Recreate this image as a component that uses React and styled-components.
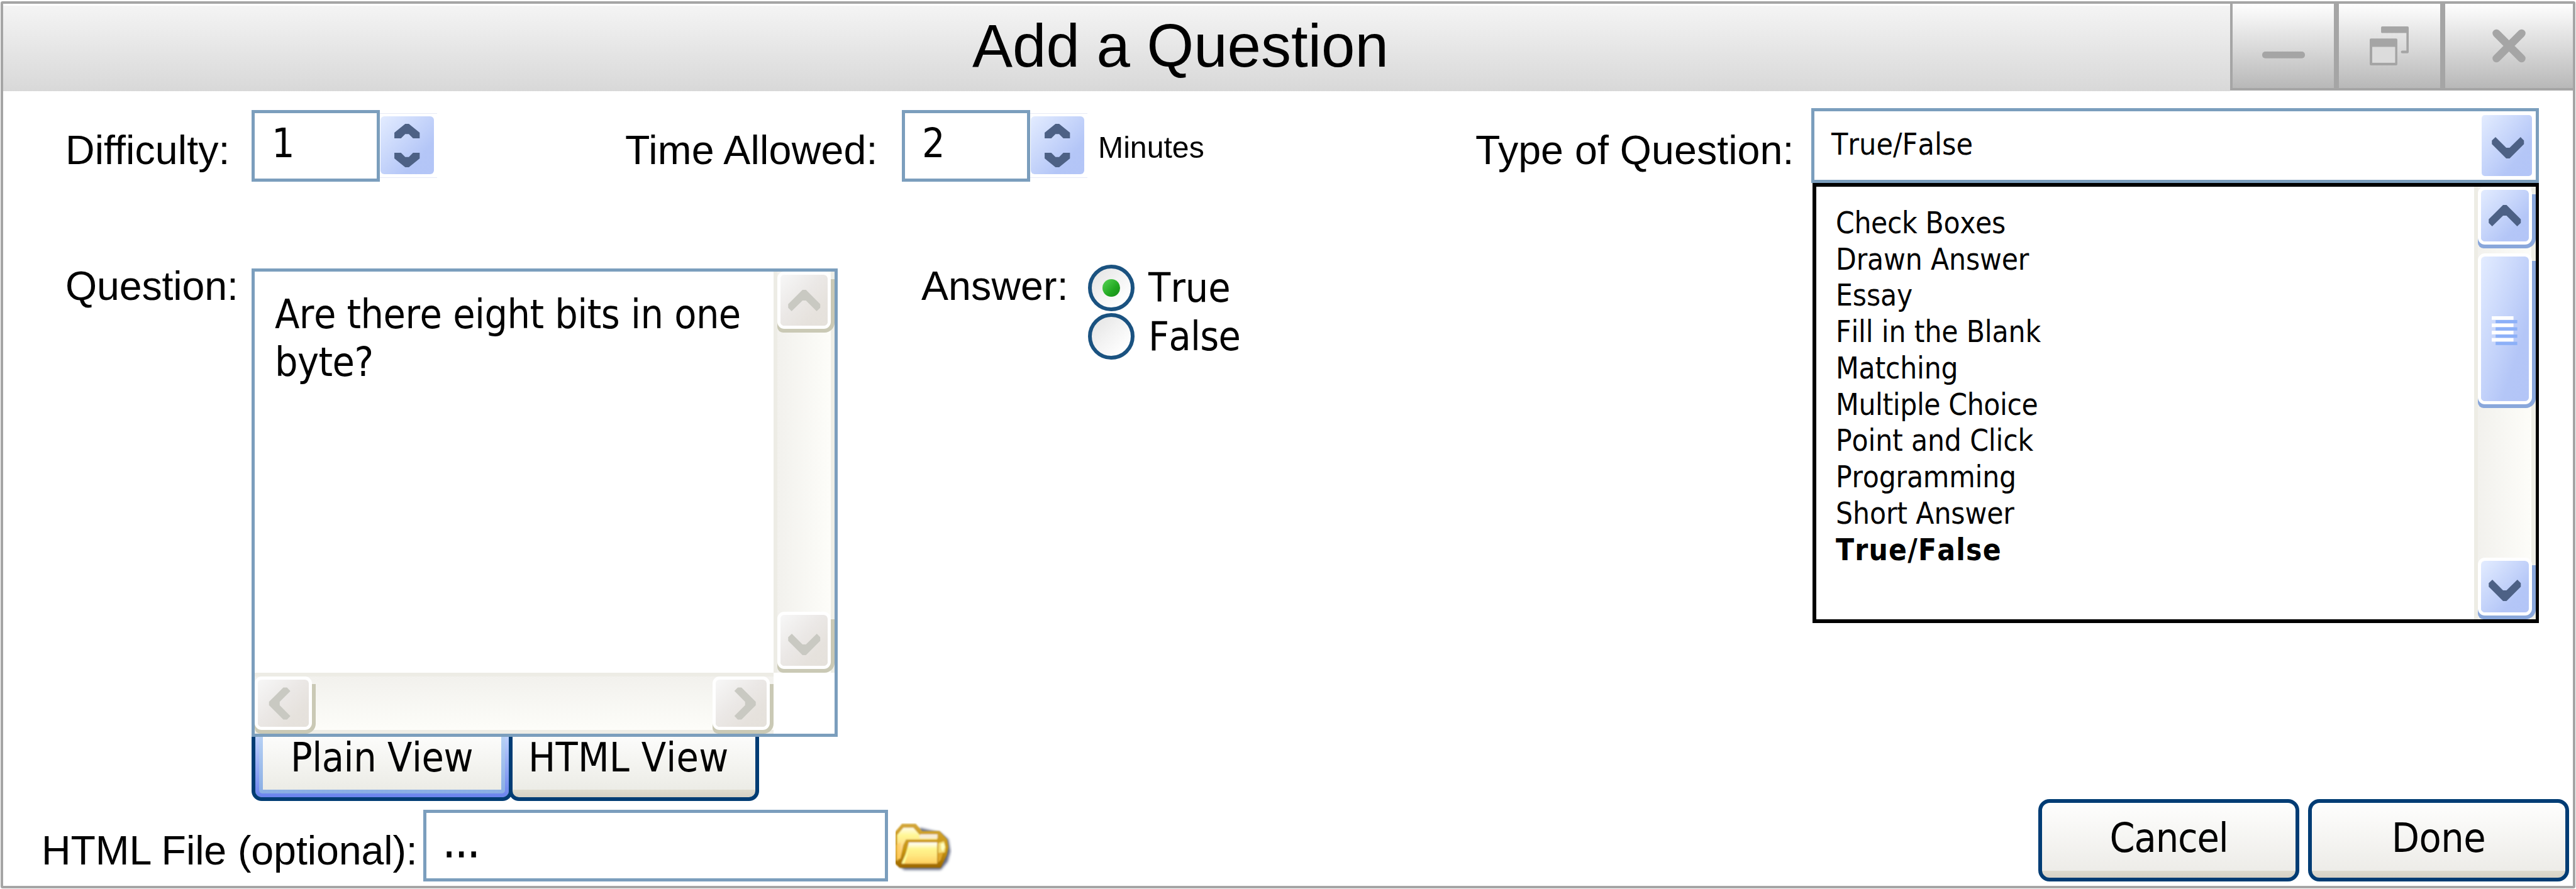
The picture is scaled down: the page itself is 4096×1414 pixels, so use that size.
import React from "react";
import styled, { createGlobalStyle, css } from "styled-components";

const GlobalStyle = createGlobalStyle`
  html, body { margin: 0; padding: 0; background: #fff; }
  *, *::before, *::after { box-sizing: border-box; }
  body { width: 4096px; height: 1414px; overflow: hidden; color: #000; }
`;

const labelFont = `"Liberation Sans", Arial, sans-serif`;
const fieldFont = `"DejaVu Sans Condensed", "DejaVu Sans", Tahoma, sans-serif`;
const steel = "#7b9ebd";
const navy = "#003c74";
const frameGray = "#a5a5a5";
const blueFace = "linear-gradient(to bottom right, #e3ecff 0%, #cad8fb 38%, #b4c6f7 72%, #b3c5f7 100%)";
const grayFace = "linear-gradient(to bottom right, #f7f7f7 0%, #ebe8e6 45%, #e6e2dd 75%, #e5e1db 100%)";

const Window = styled.div`
  width: 4094px;
  height: 1411px;
  margin: 2px 1px 0;
  border: 4px solid ${frameGray};
  border-radius: 3px;
  display: flex;
  flex-direction: column;
  background: #fff;
`;

const TitleBar = styled.header`
  flex: none;
  height: 139px;
  display: flex;
  align-items: flex-start;
`;

const Title = styled.h1`
  flex: 1;
  margin: 3px 0 0;
  height: 136px;
  padding-left: 1541px;
  background: linear-gradient(#f4f4f4, #d8d8d8);
  font: 400 96px/127px ${labelFont};
  white-space: nowrap;
`;

const CaptionButton = styled.button`
  width: ${(p) => p.$width}px;
  height: 138px;
  padding: 0;
  border: solid ${frameGray};
  border-width: 0 ${(p) => (p.$last ? 0 : 4)}px 4px 4px;
  background: linear-gradient(#fefefe, #b8b8b8);
  display: flex;
  align-items: flex-start;
  justify-content: flex-start;
`;

const CaptionGlyph = styled.svg`
  display: block;
  overflow: visible;
  fill: ${frameGray};
  margin: ${(p) => p.$top}px 0 0 ${(p) => p.$left}px;
`;

const Main = styled.main`
  flex: none;
  height: 1126px;
  padding: 27px 0 0 99px;
  display: flex;
  align-items: flex-start;
`;

const LeftColumn = styled.div`
  flex: none;
  width: 2242px;
  padding-top: 3px;
  display: flex;
  flex-direction: column;
  gap: 126px;
`;

const Row = styled.div`
  display: flex;
  align-items: flex-start;
`;

const Label = styled.label`
  flex: none;
  width: ${(p) => p.$width}px;
  margin-left: ${(p) => p.$left || 0}px;
  margin-top: ${(p) => p.$top || 0}px;
  margin-bottom: ${(p) => p.$bottom || 0}px;
  font: 400 64.5px/80px ${labelFont};
  letter-spacing: ${(p) => p.$spacing || 0}px;
  white-space: nowrap;
`;

const Unit = styled.span`
  margin: 29px 0 0 17px;
  font: 400 48.2px/60px ${labelFont};
`;

const fieldText = css`
  font-family: ${fieldFont};
  font-size: 64px;
  font-weight: 400;
  font-kerning: none;
  letter-spacing: ${(p) => p.$spacing || 0}px;
  white-space: nowrap;
`;

const Input = styled.div`
  ${fieldText}
  flex: none;
  width: ${(p) => p.$width}px;
  height: 114px;
  padding-left: 27px;
  border: 5px solid ${steel};
  background: #fff;
  line-height: 97px;
  -webkit-text-stroke: ${(p) => p.$stroke || 0}px #000;
`;

const StepperFrame = styled.div`
  flex: none;
  width: 91px;
  height: 103px;
  margin-top: 5px;
  padding: 4px 5px 5px 1px;
  border: solid #e6eaf6;
  border-width: 1px 0;
`;

const StepperBody = styled.div`
  width: 85px;
  height: 92px;
  padding: 12px 0 11px;
  border-radius: 6px;
  background: ${blueFace};
  display: flex;
  flex-direction: column;
  align-items: center;
  justify-content: space-between;
`;

const Editor = styled.div`
  margin-top: 12px;
  width: 932px;
`;

const TextArea = styled.div`
  width: 932px;
  height: 745px;
  border: 5px solid ${steel};
  background: #fff;
  display: grid;
  grid-template-columns: 1fr 97px;
  grid-template-rows: 1fr 97px;
`;

const QuestionText = styled.p`
  ${fieldText}
  margin: 0;
  padding: 30px 0 0 32px;
  line-height: 76.4px;
`;

const Track = styled.div`
  display: flex;
  justify-content: space-between;
  ${(p) =>
    p.$horizontal
      ? css`
          flex-direction: row;
          padding-top: 6px;
          background: linear-gradient(to bottom, #edece5 0 6px, #f2f1ed 6px, #fdfdf9 91px, #eeede6 91px);
        `
      : css`
          flex-direction: column;
          padding-left: 6px;
          background: linear-gradient(to right, #edece5 0 6px, #f2f1ed 6px, #fdfdf9 91px, #eeeee6 91px);
        `}
`;

const Raised = styled.div`
  flex: none;
  width: ${(p) => p.$width}px;
  height: ${(p) => p.$height}px;
  margin-bottom: ${(p) => p.$after || 0}px;
  padding: 0 6px 6px 0;
  border-radius: 0 0 16px 9px;
  background: linear-gradient(transparent 12px, ${(p) => (p.$blue ? "#89a7db" : "#cac9b5")} 12px);
`;

const RaisedFace = styled.div`
  width: 100%;
  height: 100%;
  border: 5px solid #fff;
  border-radius: 11px;
  background: ${(p) => (p.$blue ? blueFace : grayFace)};
  background-clip: padding-box;
  background-origin: padding-box;
  display: flex;
  align-items: center;
  justify-content: center;
`;

const Rest = styled.div`
  flex: 1;
`;

const Glyph = styled.svg`
  display: block;
  flex: none;
  overflow: visible;
  transform: translate(${(p) => p.$dx || 0}px, ${(p) => p.$dy || 0}px) rotate(${(p) => p.$turn || 0}deg);
`;

const Tabs = styled.div`
  display: flex;
  height: 102px;
`;

const PlainTab = styled.div`
  position: relative;
  z-index: 1;
  width: 415px;
  padding: 0 6px 6px;
  border: solid ${navy};
  border-width: 0 6px 6px;
  border-radius: 0 0 16px 16px;
  background: linear-gradient(#bdd0fb, #6b84ee);
  background-clip: padding-box;
`;

const PlainTabRing = styled.div`
  height: 100%;
  padding: 0 6px 6px;
  border-radius: 0 0 5px 5px;
  background: linear-gradient(#b6d0f4, #89ade4);
`;

const TabFace = styled.div`
  ${fieldText}
  height: 84px;
  padding-left: ${(p) => p.$left}px;
  background: linear-gradient(#fcfcfb, #ecece6);
  line-height: 67px;
`;

const HtmlTab = styled.div`
  width: 398px;
  margin-left: -6px;
  border: solid ${navy};
  border-width: 0 6px 6px;
  border-radius: 0 0 16px 16px;
  background: linear-gradient(#dedbce, #d6d0c5) 0 84px / 100% 12px no-repeat;
`;

const RadioGroup = styled.div`
  margin-top: 6px;
  display: flex;
  flex-direction: column;
  gap: 3px;
`;

const RadioRow = styled.div`
  display: flex;
  gap: 22px;
`;

const RadioRing = styled.div`
  width: 74px;
  height: 74px;
  border: 6px solid #1a5280;
  border-radius: 50%;
  background: linear-gradient(to bottom right, #e6e6e6 10%, #f4f4f4 50%, #fff 85%);
  display: flex;
  align-items: center;
  justify-content: center;
`;

const RadioDot = styled.div`
  width: 28px;
  height: 28px;
  border-radius: 50%;
  background: linear-gradient(to bottom right, #52cf50 8%, #22a822 60%, #158a15 100%);
`;

const RadioText = styled.span`
  ${fieldText}
  line-height: 74px;
`;

const ComboBox = styled.div`
  width: 1157px;
`;

const ComboField = styled.div`
  height: 119px;
  padding: 0 6px 0 27px;
  border: 5px solid ${steel};
  display: flex;
  align-items: center;
  justify-content: space-between;
`;

const ComboValue = styled.span`
  ${fieldText}
  font-size: 48px;
  line-height: 109px;
  padding-bottom: 4px;
`;

const ComboArrow = styled.div`
  width: 80px;
  height: 97px;
  border-radius: 5px;
  background: ${blueFace};
  display: flex;
  align-items: center;
  justify-content: center;
`;

const DropDown = styled.div`
  height: 700px;
  margin-left: 2px;
  border: 6px solid #000;
  border-width: 6px 5px 6px 6px;
  background: #fff;
  display: grid;
  grid-template-columns: 1fr 98px;
`;

const OptionList = styled.ul`
  margin: 0;
  padding: 29px 0 0 31px;
  list-style: none;
`;

const Option = styled.li`
  ${fieldText}
  font-size: 47.4px;
  font-weight: ${(p) => (p.$selected ? 700 : 400)};
  line-height: 57.73px;
`;

const Footer = styled.footer`
  flex: none;
  height: 131px;
  padding: 0 6px 0 61px;
  display: flex;
  align-items: flex-end;
`;

const FolderIcon = styled.svg`
  display: block;
  width: 89.8px;
  height: 81.8px;
  margin: 0 auto 11px 12px;
`;

const PushButton = styled.button`
  width: 415px;
  height: 131px;
  margin-left: ${(p) => p.$gap || 0}px;
  padding: 0;
  border: 6px solid ${navy};
  border-radius: 18px;
  overflow: hidden;
  background: linear-gradient(#fefefd, #edece8) 0 0 / 100% 108px no-repeat,
    linear-gradient(#dedbce, #d6d0c5) 0 108px / 100% 12px no-repeat;
  color: #000;
`;

const PushButtonText = styled.span`
  ${fieldText}
  display: block;
  height: 119px;
  line-height: 113px;
`;

function Chevron({ turn, dx, dy, blue }) {
  return (
    <Glyph width="51.5" height="34" viewBox="0 0 159 106" $turn={turn} $dx={dx} $dy={dy}>
      <path d="M71 0H88L159 71V89L141 106L88 53H71L17 106L0 89V71Z" fill={blue ? "#4d6185" : "#c9c9c2"} />
    </Glyph>
  );
}

function ScrollButton({ turn, dx, dy, blue, width = 91, height = 97, after }) {
  return (
    <Raised $width={width} $height={height} $blue={blue} $after={after}>
      <RaisedFace $blue={blue}>
        <Chevron turn={turn} dx={dx} dy={dy} blue={blue} />
      </RaisedFace>
    </Raised>
  );
}

function Stepper() {
  const d = "M18 0H24L42 14.5V24H31L24 17H18L11 24H0V14.5Z";
  return (
    <StepperFrame>
      <StepperBody>
        <Glyph width="40.4" height="23" viewBox="0 0 42 24">
          <path d={d} fill="#4d6185" />
        </Glyph>
        <Glyph width="40.4" height="23" viewBox="0 0 42 24" $turn={180}>
          <path d={d} fill="#4d6185" />
        </Glyph>
      </StepperBody>
    </StepperFrame>
  );
}

function Grip() {
  return (
    <Glyph width="41" height="47" viewBox="0 0 41 47" $dx={-1} $dy={3}>
      {[0, 1, 2, 3].map((i) => (
        <g key={i}>
          <rect x="0" y={i * 11.55} width="34.6" height="5.7" fill="#fff" />
          <rect x="6.2" y={i * 11.55 + 6} width="34.4" height="5.2" fill="#8cb0f8" />
        </g>
      ))}
    </Glyph>
  );
}

function Folder() {
  return (
    <FolderIcon viewBox="238 180 280 255">
      <defs>
        <filter id="soft" x="-10%" y="-10%" width="120%" height="120%">
          <feGaussianBlur stdDeviation="3" />
        </filter>
        <filter id="shade" x="-20%" y="-20%" width="140%" height="140%">
          <feGaussianBlur stdDeviation="7" />
        </filter>
        <linearGradient id="edge" x1="0" y1="0" x2="0" y2="1">
          <stop offset="0" stopColor="#d3a63a" />
          <stop offset="0.6" stopColor="#c8960f" />
          <stop offset="1" stopColor="#9c6600" />
        </linearGradient>
        <linearGradient id="back" x1="0" y1="0" x2="0" y2="1">
          <stop offset="0" stopColor="#fffbe8" />
          <stop offset="0.25" stopColor="#fff794" />
          <stop offset="0.6" stopColor="#ffd987" />
          <stop offset="1" stopColor="#ffc94f" />
        </linearGradient>
        <linearGradient id="front" x1="0" y1="0" x2="0" y2="1">
          <stop offset="0" stopColor="#fffef2" />
          <stop offset="0.14" stopColor="#fffbd0" />
          <stop offset="0.3" stopColor="#fff68e" />
          <stop offset="0.65" stopColor="#ffe57e" />
          <stop offset="1" stopColor="#ffcf5e" />
        </linearGradient>
      </defs>
      <path d="M262 396L280 412H462L496 372L510 320L500 262L460 228L360 204Z" fill="#46506e" opacity="0.85" filter="url(#shade)" />
      <g filter="url(#soft)">
        <path d="M270 184H338L370 220H456L494 262L500 300L492 340L462 402H258L234 380V226Z" fill="url(#edge)" />
        <path d="M277 203H326L362 244L440 240L444 262H290L276 290L262 356L246 360V240Z" fill="url(#back)" />
        <path d="M354 243L362 236H446V256H360Z" fill="#f7ecd6" />
        <path d="M240 290L262 276L262 340L250 368L240 366Z" fill="#ffc95a" opacity="0.6" />
        <path d="M304 277H444V382H268L286 344Z" fill="url(#front)" />
        <path d="M302 300L296 340L282 380H268L288 335Z" fill="#ffff9a" />
        <path d="M450 280L478 270L486 300L482 326L450 330Z" fill="#f4dd74" />
        <path d="M462 284L478 278L482 300L472 322L464 308Z" fill="#ffffc0" />
        <path d="M448 330L474 326L462 362L448 378Z" fill="#e0a82e" />
      </g>
    </FolderIcon>
  );
}

const OPTIONS = [
  ["Check Boxes", -0.35],
  ["Drawn Answer", -0.15],
  ["Essay", -0.1],
  ["Fill in the Blank", -0.15],
  ["Matching", -0.2],
  ["Multiple Choice", -0.4],
  ["Point and Click", -0.15],
  ["Programming", -0.2],
  ["Short Answer", -0.1],
  ["True/False", 1.2],
];

export default function App() {
  return (
    <>
      <GlobalStyle />
      <Window>
        <TitleBar>
          <Title>Add a Question</Title>
          <CaptionButton $width={169}>
            <CaptionGlyph $left={47} $top={76} width="68" height="11" viewBox="0 0 68 11">
              <rect width="68" height="10.8" rx="5" />
            </CaptionGlyph>
          </CaptionButton>
          <CaptionButton $width={169}>
            <CaptionGlyph $left={49} $top={36} width="62" height="62" viewBox="0 0 64.5 64.5">
              <path d="M20.5 0H62.5Q64.5 0 64.5 2V42.5Q64.5 44.5 62.5 44.5H54Q51.5 44.5 51.5 42.3T54 40H60.7V11H20.5Q18.8 11 18.8 9V2Q18.8 0 20.5 0Z" />
              <path fillRule="evenodd" d="M2 20H43.7Q45.7 20 45.7 22V62.5Q45.7 64.5 43.7 64.5H2Q0 64.5 0 62.5V22Q0 20 2 20ZM4.2 34V60H41.9V34Z" />
              <rect x="4.2" y="34" width="37.7" height="26" fill="#dcdcdc" />
            </CaptionGlyph>
          </CaptionButton>
          <CaptionButton $width={207} $last>
            <CaptionGlyph $left={75} $top={40} width="53" height="54" viewBox="0 0 53 54">
              <path d="M6.5 7L46.5 47M46.5 7L6.5 47" stroke={frameGray} strokeWidth="12.5" strokeLinecap="round" />
            </CaptionGlyph>
          </CaptionButton>
        </TitleBar>

        <Main>
          <LeftColumn>
            <Row>
              <Label $width={296} $top={24} $spacing={0.1}>Difficulty:</Label>
              <Input $width={204}>1</Input>
              <Stepper />
              <Label $left={299} $width={440} $top={24} $spacing={0.2}>Time Allowed:</Label>
              <Input $width={204}>2</Input>
              <Stepper />
              <Unit>Minutes</Unit>
            </Row>

            <Row>
              <Label $width={296} $spacing={-0.15}>Question:</Label>
              <Editor>
                <TextArea>
                  <QuestionText $spacing={-0.54}>
                    Are there eight bits in one
                    <br />
                    byte?
                  </QuestionText>
                  <Track>
                    <ScrollButton turn={0} />
                    <ScrollButton turn={180} dy={6} />
                  </Track>
                  <Track $horizontal>
                    <ScrollButton turn={-90} dx={-6} width={97} height={91} />
                    <ScrollButton turn={90} dx={6} width={97} height={91} />
                  </Track>
                </TextArea>
                <Tabs>
                  <PlainTab>
                    <PlainTabRing>
                      <TabFace $left={44} $spacing={-0.46}>Plain View</TabFace>
                    </PlainTabRing>
                  </PlainTab>
                  <HtmlTab>
                    <TabFace $left={25} $spacing={0.23}>HTML View</TabFace>
                  </HtmlTab>
                </Tabs>
              </Editor>
              <Label $left={133} $width={265} $spacing={0.1}>Answer:</Label>
              <RadioGroup>
                <RadioRow>
                  <RadioRing>
                    <RadioDot />
                  </RadioRing>
                  <RadioText>True</RadioText>
                </RadioRow>
                <RadioRow>
                  <RadioRing />
                  <RadioText $spacing={-0.7}>False</RadioText>
                </RadioRow>
              </RadioGroup>
            </Row>
          </LeftColumn>

          <Label $width={534} $top={27} $spacing={0.05}>Type of Question:</Label>
          <ComboBox>
            <ComboField>
              <ComboValue>True/False</ComboValue>
              <ComboArrow>
                <Chevron turn={180} dx={2} dy={3} blue />
              </ComboArrow>
            </ComboField>
            <DropDown>
              <OptionList>
                {OPTIONS.map(([name, spacing]) => (
                  <Option key={name} $spacing={spacing} $selected={name === "True/False"}>
                    {name}
                  </Option>
                ))}
              </OptionList>
              <Track>
                <ScrollButton turn={0} width={92} height={98} after={8} blue />
                <Raised $width={92} $height={246} $blue>
                  <RaisedFace $blue>
                    <Grip />
                  </RaisedFace>
                </Raised>
                <Rest />
                <ScrollButton turn={180} dy={6} width={92} height={98} blue />
              </Track>
            </DropDown>
          </ComboBox>
        </Main>

        <Footer>
          <Label $width={607} $bottom={9} $spacing={-0.1}>HTML File (optional):</Label>
          <Input $width={739} $spacing={1.2} $stroke={1.5}>...</Input>
          <Folder />
          <PushButton>
            <PushButtonText $spacing={-1.2}>Cancel</PushButtonText>
          </PushButton>
          <PushButton $gap={14}>
            <PushButtonText $spacing={-0.5}>Done</PushButtonText>
          </PushButton>
        </Footer>
      </Window>
    </>
  );
}
